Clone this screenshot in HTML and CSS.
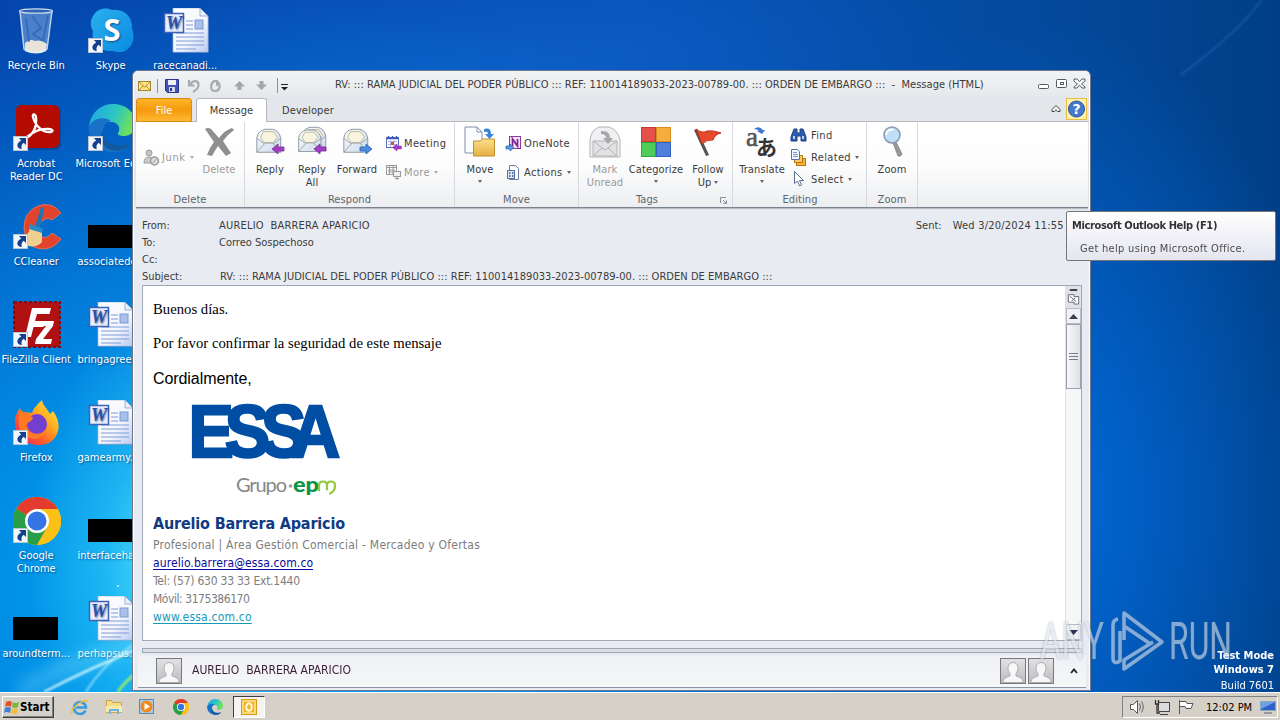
FILE: index.html
```html
<!DOCTYPE html>
<html lang="en">
<head>
<meta charset="utf-8">
<title>Desktop</title>
<link rel="stylesheet" href="styles.css">
</head>
<body>
<svg class="defs" width="0" height="0" aria-hidden="true">
  <defs>
    <linearGradient id="gPaper" x1="0" y1="0" x2="1" y2="1"><stop offset="0" stop-color="#fff"/><stop offset=".6" stop-color="#f3f6fd"/><stop offset="1" stop-color="#b9c8ee"/></linearGradient>
    <linearGradient id="gEnv" x1="0" y1="0" x2="1" y2="1"><stop offset="0" stop-color="#fdfdfd"/><stop offset="1" stop-color="#c9d9ea"/></linearGradient>
    <linearGradient id="gFolder" x1="0" y1="0" x2="0" y2="1"><stop offset="0" stop-color="#fbe08f"/><stop offset="1" stop-color="#e5b040"/></linearGradient>
    <linearGradient id="gPerson" x1="0" y1="0" x2="0" y2="1"><stop offset="0" stop-color="#e2e2e4"/><stop offset="1" stop-color="#bcbcc0"/></linearGradient>
    <linearGradient id="gSkype" x1="0" y1="0" x2="1" y2="1"><stop offset="0" stop-color="#2bb0ee"/><stop offset="1" stop-color="#0a8be0"/></linearGradient>
    <linearGradient id="gEdge1" x1="0" y1="0" x2="1" y2=".3"><stop offset="0" stop-color="#1fa4e8"/><stop offset=".6" stop-color="#2cc7c0"/><stop offset="1" stop-color="#6fe05a"/></linearGradient>
    <linearGradient id="gFox" x1="1" y1="0" x2="0" y2="1"><stop offset="0" stop-color="#fff04a"/><stop offset=".35" stop-color="#ffb021"/><stop offset=".65" stop-color="#ff5a2a"/><stop offset="1" stop-color="#e3187c"/></linearGradient>
    <symbol id="shortcut" viewBox="0 0 15 15"><rect x=".5" y=".5" width="14" height="14" fill="#f2f5fa" stroke="#b9c4d4"/><path d="M6 2h7v7l-2.300-2.200C8.500 8.600 8 10.300 8.800 13 3.500 12.500 2.500 7.500 8.200 4.400z" fill="#12408c"/></symbol>
    <symbol id="word" viewBox="0 0 48 48">
      <path d="M12 1h27l10 9v35H12z" fill="#5d7fc6" opacity=".5"/>
      <path d="M12 0h27l8 8v36H12z" fill="url(#gPaper)" stroke="#a8b8de" stroke-width=".7"/>
      <path d="M39 0v8h8z" fill="#e9effc" stroke="#8294bd" stroke-width=".7"/>
      <path d="M25 13h7M25 17h7M25 21h7M15 25h28M15 29h28M15 33h28M15 37h28M15 41h20" stroke="#7f9bd8" stroke-width="1"/>
      <rect x="34" y="12" width="8" height="9" fill="#a9c0ec" stroke="#7d99d2"/>
      <rect x="3.500" y="5.500" width="19" height="19" fill="#e8effc" stroke="#3f62b4" stroke-width="1.500"/>
      <text x="13" y="21" class="glyph-w" text-anchor="middle" fill="#2a4fa8">W</text>
    </symbol>
    <symbol id="chrome" viewBox="0 0 48 48">
      <circle cx="24" cy="24" r="24" fill="#fbc116"/>
      <path d="M24 24L3.200 12A24 24 0 0 1 44.800 12z" fill="#e33b2e"/>
      <path d="M3.200 12A24 24 0 0 0 24 48L34.400 30 24 24z" fill="#2a9d47"/>
      <path d="M24 12h20.800A24 24 0 0 1 24 48l10.400-18z" fill="#fbc116"/>
      <circle cx="24" cy="24" r="12" fill="#fff"/><circle cx="24" cy="24" r="9.500" fill="#3474e4"/>
    </symbol>
    <symbol id="edge" viewBox="0 0 48 48">
      <path d="M1 22C3 8 13 0 25 0c14 0 23 10 23 20 0 8-6 12-12 12-4 0-7-1-6-3 3-4 1-11-7-11C13 17 4 20 1 30z" fill="url(#gEdge1)"/>
      <path d="M1 22c4-8 16-10 22-5-6 1-9 7-8 13 1 8 8 14 16 14 6 0 11-3 12-4C36 50 20 51 9 42 2 36 0 29 1 22z" fill="#1a72c8"/>
      <path d="M15 28c1 12 13 17 28 11-5 9-20 11-28 2-4-5-3-10 0-13z" fill="#125aa0"/>
    </symbol>
    <symbol id="envelope" viewBox="0 0 32 32">
      <path d="M3 13Q4 5 12 3.500h8Q27 5 28.500 13v15H3z" fill="url(#gEnv)" stroke="#8b949d"/>
      <path d="M7 12l3-6h11l4 6-5 6h-9z" fill="#f8f4e0" stroke="#b9b28f" stroke-width=".9"/>
      <path d="M3 28l9-10h8l8.500 10M3 13l8 6M28.500 13l-8 6" fill="none" stroke="#8f9aa5" stroke-width=".9"/>
    </symbol>
    <symbol id="arrowL" viewBox="0 0 14 12"><path d="M1 6l6-5v3h6v4H7v3z" fill="#a33ec4" stroke="#7d2a9b" stroke-width=".8"/></symbol>
    <symbol id="person" viewBox="0 0 26 26">
      <rect x=".5" y=".5" width="25" height="25" fill="url(#gPerson)" stroke="#77797d"/>
      <path d="M3 24.500c0-4.500 3-5 7-6.500v-2.500c-3-3-3-11 3-11s6 8 3 11V18c4 1.500 7 2 7 6.500z" fill="#f7f7f8" stroke="#a0a0a4" stroke-width=".8"/>
    </symbol>
  </defs>
</svg>

<div class="desktop">
  <svg class="rays" width="1280" height="692" viewBox="0 0 1280 692">
    <defs><filter id="soft"><feGaussianBlur stdDeviation="1.300"/></filter><filter id="soft2"><feGaussianBlur stdDeviation="8"/></filter></defs>
    <path d="M20 692Q80 655 140 645" fill="none" stroke="#8feaff" stroke-width="14" opacity=".35" filter="url(#soft2)"/>
    <g filter="url(#soft)" fill="none">
      <path d="M44 692Q90 668 140 648" stroke="#d9faff" stroke-width="2.500" opacity=".85"/>
      <path d="M86 692Q104 662 138 642" stroke="#c0f4ff" stroke-width="2" opacity=".7"/>
      <path d="M118 692Q124 682 140 670" stroke="#a8f060" stroke-width="2.500"/>
      <path d="M1180 75Q1230 40 1262 0" stroke="#4f90d8" stroke-width="2" opacity=".3"/>
    </g>
    <circle cx="118" cy="586" r="1" fill="#b8f4ff"/>
  </svg>

  <div class="icons">
    <div class="icon"><svg viewBox="0 0 48 48"><path d="M8 3l4 38q12 6 23 0l5-38z" fill="#6f9fda" opacity=".65"/><path d="M8 3l4 38q12 6 23 0l5-38" fill="none" stroke="#b9d2ee" stroke-width="1.500"/><path d="M13 35q5-5 10-2 6-2 12 3l-1 6q-10 5-21 0z" fill="#e9e4d8"/><path d="M14 10l3 24M20 8l9 12-8 6 9 6M36 7l-5 26" stroke="#2f62b4" stroke-width="2" fill="none" opacity=".7"/><ellipse cx="24" cy="3" rx="16.500" ry="2.200" fill="#2f62b4" stroke="#cfdcee" stroke-width="1.300"/><path d="M13 42q11 5 21 0" fill="none" stroke="#e4ebf4" stroke-width="2"/></svg><span>Recycle Bin</span></div>
    <div class="icon"><svg viewBox="0 0 48 48"><rect x="4" y="0" width="45" height="44" rx="6" fill="#0b2e66" opacity=".4"/><rect x="4" y="-1" width="43" height="43" rx="5" fill="#b30b00"/><path d="M12 33c10-4 13-12 12-22-1-4-4-3-3 0 2 8 9 16 18 15 3-1 1-3-2-3-8-1-16 3-22 8-3 2-5 4-3 2z" fill="none" stroke="#fff" stroke-width="2.300"/><use href="#shortcut" x="1" y="30" width="15" height="15"/></svg><span>Acrobat<br>Reader DC</span></div>
    <div class="icon"><svg viewBox="0 0 48 48"><path d="M49 9Q40-3 26 2 12 8 12 24q1 20 18 21 12 0 19-10l-9-6q-6 7-12 3-6-6 1-14 6-6 11-2z" fill="#e2432c" stroke="#f27a52" stroke-width=".8"/><path d="M29 3l3 1-4 21-5-2z" fill="#1d76b8"/><path d="M18 22l12 4 0 12q-6 7-17 3l-5-5q9-3 10-14z" fill="#f1cf90"/><path d="M18 20l13 5-1 4-13-4z" fill="#2c8cc8"/><use href="#shortcut" x="1" y="30" width="15" height="15"/></svg><span>CCleaner</span></div>
    <div class="icon"><svg viewBox="0 0 48 48"><rect x="2" y="0" width="46" height="45" fill="#b01214"/><rect x="2" y="0" width="46" height="45" fill="none" stroke="#7f0b14" stroke-width="2" stroke-dasharray="3 2"/><path d="M13 35l7-29h19l-1.500 6H25l-2 7h10l-1.500 6H21.500l-2.500 10z" fill="#fff"/><path d="M27 19h15l-1 5-10 13h9l-1 5H23l1-5 10-13h-8z" fill="#fff"/><use href="#shortcut" x="1" y="30" width="15" height="15"/></svg><span>FileZilla Client</span></div>
    <div class="icon"><svg viewBox="0 0 48 48"><path d="M3 24C2 17 6 11 8 8c1 3 3 4 5 4l7 1c2-6 7-10 10-13 1 6 5 8 8 14l3-3c6 8 7 17 4 23-4 9-12 11-19 11C13 45 4 36 3 24z" fill="url(#gFox)"/><circle cx="25" cy="24" r="10" fill="#7140d0"/><path d="M8 12c4 4 10 2 13 6-1 4-7 4-7 8 2 8 12 10 19 6-3 7-13 9-20 4-6-4-8-14-5-24z" fill="#ff7a25"/><use href="#shortcut" x="1" y="30" width="15" height="15"/></svg><span>Firefox</span></div>
    <div class="icon"><svg viewBox="0 0 48 48"><use href="#chrome" x="1" y="-1" width="48" height="48"/><use href="#shortcut" x="1" y="30" width="15" height="15"/></svg><span>Google<br>Chrome</span></div>
    <div class="icon"><svg viewBox="0 0 48 48"><rect x="1" y="21" width="45" height="23" fill="#000"/></svg><span>aroundterm...</span></div>

    <div class="icon"><svg viewBox="0 0 48 48"><path d="M6 8C10 0 20-1 25 2 37 0 46 9 45 21c4 10 0 18-7 22-5 2-10 1-12 0C13 44 4 36 6 23 3 18 3 13 6 8z" fill="url(#gSkype)"/><text x="25" y="33" text-anchor="middle" class="glyph-s" fill="#fff">S</text><use href="#shortcut" x="1" y="30" width="15" height="15"/></svg><span>Skype</span></div>
    <div class="icon"><svg viewBox="0 0 48 48"><use href="#edge" x="1" y="-2" width="48" height="48"/><use href="#shortcut" x="1" y="30" width="15" height="15"/></svg><span class="clip edge">Microsoft Edge</span></div>
    <div class="icon"><svg viewBox="0 0 48 48"><rect x="1" y="21" width="45" height="23" fill="#000"/></svg><span class="clip">associatede...</span></div>
    <div class="icon"><svg viewBox="0 0 48 48"><use href="#word" x="-1" width="48" height="48"/></svg><span class="clip">bringagree...</span></div>
    <div class="icon"><svg viewBox="0 0 48 48"><use href="#word" x="-1" width="48" height="48"/></svg><span class="clip">gamearmy.rtf</span></div>
    <div class="icon"><svg viewBox="0 0 48 48"><rect x="1" y="21" width="45" height="23" fill="#000"/></svg><span class="clip">interfaceha...</span></div>
    <div class="icon"><svg viewBox="0 0 48 48"><use href="#word" x="-1" width="48" height="48"/></svg><span class="clip">perhapsus.rtf</span></div>

    <div class="icon"><svg viewBox="0 0 48 48"><use href="#word" width="48" height="48"/></svg><span>racecanadi...</span></div>
  </div>

  <div class="build"><b>Test Mode</b><b>Windows 7</b><span>Build 7601</span></div>

  <main class="window">
    <header class="titlebar">
      <svg class="qat" width="160" height="26" viewBox="0 0 160 26">
        <rect x="3.500" y="9.500" width="12" height="9" fill="#ffe58a" stroke="#a8862c"/><path d="M4 10l5.500 5 5.500-5M4 18l4-4M15 18l-4-4" fill="none" stroke="#b08a2a"/>
        <path d="M22.500 7v14" stroke="#8a9098"/>
        <path d="M30.500 7.500h13v13h-11l-2-2z" fill="#4252b4" stroke="#2b3588"/><rect x="33" y="8" width="8" height="5" fill="#eaf0fb"/><rect x="34" y="15" width="6" height="5" fill="#d0d8ea"/><rect x="35" y="16" width="2" height="3" fill="#2b3588"/>
        <path d="M54 8v5.500h5.500M55 13c2-5 8-5 8.500-1s-2 6-5.500 8" fill="none" stroke="#a9acb2" stroke-width="2.200"/>
        <path d="M79 9c-4 3-4 10 1 10s6-6 3-9M78 9h4v5" fill="none" stroke="#a9acb2" stroke-width="2.200"/>
        <path d="M99 14.500l5.500-5.500 5.500 5.500h-3.500v3.500h-4v-3.500zM121 12.500l5.500 5.500 5.500-5.500h-3.500V9h-4v3.500z" fill="#a3a6ab"/>
        <path d="M142.500 6v15" stroke="#8a9098"/><path d="M146 12.500h7" stroke="#222" stroke-width="1.200"/><path d="M146 15h7l-3.500 3.500z" fill="#222"/>
      </svg>
      <h1>RV: ::: RAMA JUDICIAL DEL PODER PÚBLICO ::: REF: 110014189033-2023-00789-00. ::: ORDEN DE EMBARGO ::: &nbsp;-&nbsp; Message (HTML)</h1>
      <svg class="winctl" width="50" height="14" viewBox="0 0 50 14"><g fill="#fff" stroke="#555a62"><rect x=".5" y="6.500" width="10" height="4" rx="1"/><rect x="18.500" y="1.500" width="10" height="8" rx="1"/><rect x="22.500" y="4.500" width="3" height="2"/></g><path d="M36 1h3l2.500 2.800L44 1h3v2l-3.500 3L47 9v1h-3l-2.500-2.800L39 10h-3v-1l3.500-3L36 3z" fill="#fff" stroke="#555a62"/></svg>
    </header>
    <nav class="tabs">
      <span class="tab file">File</span><span class="tab active">Message</span><span class="tab dev">Developer</span>
      <svg class="help" width="36" height="22" viewBox="0 0 36 22"><path d="M2 13.500V11.500l4-4 4 4v2H7.500L6 11.800 4.500 13.500z" fill="#fff" stroke="#444"/><rect x="16.500" y=".5" width="20" height="21" fill="#fdf0b0" stroke="#e8c040"/><circle cx="26.500" cy="11" r="8" fill="#4478c8" stroke="#2a55a4"/><text x="26.500" y="16" text-anchor="middle" class="glyph-q" fill="#fff">?</text></svg>
    </nav>

    <section class="ribbon">
      <div class="group g-delete">
        <div class="tools">
          <div class="col junk"><span class="small off"><svg viewBox="0 0 17 17"><circle cx="6" cy="4" r="3" fill="#c4c4c4" stroke="#9a9a9a"/><path d="M1 14q0-6 5-6t5 6z" fill="#ccc" stroke="#9a9a9a"/><circle cx="11.500" cy="12" r="4" fill="#ddd" stroke="#9a9a9a" stroke-width="1.500"/><path d="M9 14.500l5-5" stroke="#9a9a9a"/></svg>Junk<i></i></span></div>
          <div class="big off w40"><svg viewBox="0 0 32 32"><path d="M2 3q3-2 6 0l8 9q6-8 13-10l2 2q-6 4-11 11l8 12-5 3-8-10q-4 6-6 10l-5-1q2-7 7-13z" fill="#8f8f8f"/></svg>Delete</div>
        </div>
        <div class="gname">Delete</div>
      </div>
      <div class="group g-respond">
        <div class="tools">
          <div class="big w42"><svg viewBox="0 0 32 32"><use href="#envelope" width="30" height="30"/><use href="#arrowL" x="17" y="17" width="14" height="12"/></svg>Reply</div>
          <div class="big w42"><svg viewBox="0 0 32 32"><use href="#envelope" x="3" y="-2" width="30" height="30"/><use href="#envelope" width="28" height="30"/><use href="#arrowL" x="17" y="17" width="14" height="12"/></svg>Reply<br>All</div>
          <div class="big w48"><svg viewBox="0 0 32 32"><use href="#envelope" width="30" height="30"/><path d="M31 23l-6-5v3h-6v4h6v3z" fill="#4a8be0" stroke="#2b62b4" stroke-width=".8"/></svg>Forward</div>
          <div class="col two"><span class="small"><svg viewBox="0 0 17 17"><rect x="1.500" y="2.500" width="12" height="10" fill="#fff" stroke="#5a6fbe"/><path d="M1.500 3.500h12M3.500 1v3M7.500 1v3M11.500 1v3" stroke="#3f58b4" stroke-width="1.500"/><path d="M3 6.500h9M3 9.500h9M5.500 5v7M9 5v7" stroke="#9aabdd" stroke-width=".8"/><rect x="6" y="7" width="3" height="3" fill="#e05040"/><use href="#arrowL" x="7" y="8" width="10" height="9"/></svg>Meeting</span><span class="small off"><svg viewBox="0 0 17 17"><rect x="1.500" y="1.500" width="10" height="9" fill="#fff" stroke="#999"/><path d="M1.500 3.500h10M3 6h7M3 8h7M4.500 2v8M8 2v8" stroke="#999"/><rect x="8.500" y="7.500" width="7" height="5" fill="#eee" stroke="#999"/><path d="M12 12v4M10 14.500h4" stroke="#999"/></svg>More<i></i></span></div>
        </div>
        <div class="gname">Respond</div>
      </div>
      <div class="group g-move">
        <div class="tools">
          <div class="big w42"><svg viewBox="0 0 32 32"><path d="M1 1h12l5 5v21H1z" fill="#fcfdff" stroke="#8090a8"/><path d="M13 1v5h5" fill="none" stroke="#8090a8"/><path d="M9.500 15h7l2-2h12v17h-21z" fill="url(#gFolder)" stroke="#c18e2c"/><path d="M20 3q7-2 7 5h3l-4.500 5L21 8h3q0-3-4-2z" fill="#3c82d8"/></svg>Move<i></i></div>
          <div class="col two"><span class="small"><svg viewBox="0 0 17 17"><rect x="4.500" y="1.500" width="11" height="12" fill="#f3e3f8" stroke="#8c3aa0"/><path d="M7.500 11V4l5 7V4" fill="none" stroke="#7c2490" stroke-width="1.700"/><path d="M1 11h4V9l4 3.500L5 16v-2H1z" fill="#5b9ae6" stroke="#2f62b0" stroke-width=".7"/></svg>OneNote</span><span class="small"><svg viewBox="0 0 17 17"><path d="M4.500 1.500h6l3 3v11h-9z" fill="#fff" stroke="#6d7f9e"/><rect x="2.500" y="6.500" width="7" height="8" fill="#e0e8f6" stroke="#5c719a"/><path d="M4 9h1.500M7 9h1.500M4 12h1.500M7 12h1.500" stroke="#33508c" stroke-width="1.300"/></svg>Actions<i></i></span></div>
        </div>
        <div class="gname">Move</div>
      </div>
      <div class="group g-tags">
        <div class="tools">
          <div class="big off w44"><svg viewBox="0 0 32 32"><path d="M1 14Q2 4 10 1h10q9 3 11 13v17H1z" fill="#f0f0f2" stroke="#b4b4b6"/><path d="M4 15h24v15H4z" fill="#e2e2e4" stroke="#b4b4b6"/><path d="M4 15l12 9 12-9M4 30l9-8M28 30l-9-8" fill="none" stroke="#b4b4b6"/><path d="M12 5q9-1 9 7h3l-5 6-5-6h3q0-4-5-4z" fill="#a8a8ab"/></svg>Mark<br>Unread</div>
          <div class="big w58"><svg viewBox="0 0 32 32"><rect x="1.500" y="1.500" width="14" height="14" fill="#e4504a" stroke="#c83834"/><rect x="16.500" y="1.500" width="14" height="14" fill="#f5ad3e" stroke="#d98c22"/><rect x="1.500" y="16.500" width="14" height="14" fill="#4fcb58" stroke="#2fa83c"/><rect x="16.500" y="16.500" width="14" height="14" fill="#4f7fdc" stroke="#3462c0"/></svg>Categorize<i></i></div>
          <div class="big w46"><svg viewBox="0 0 32 32"><path d="M2 4l3-1 12 26-3 1z" fill="#555"/><path d="M4 3q6 5 11 2 6-1 14 2-6 1-8 7-6-1-11 4z" fill="#e8482c" stroke="#b8301c"/></svg>Follow<br><span>Up<i class="in"></i></span></div>
        </div>
        <div class="gname">Tags<svg class="launch" viewBox="0 0 9 9"><path d="M1.500 7V1.500H7M4 4l3 3M7.500 4.500v3h-3" fill="none" stroke="#8a9098"/></svg></div>
      </div>
      <div class="group g-edit">
        <div class="tools">
          <div class="big w48"><svg viewBox="0 0 32 32"><text x="0" y="20" class="glyph-a" fill="#555">a</text><text x="10" y="29" class="glyph-jp" fill="#333">あ</text><path d="M8 3q5-4 9 1h2l-3 4-5-3h2q-2-2-5-2z" fill="#3c78d0"/></svg>Translate<i></i></div>
          <div class="col three"><span class="small"><svg viewBox="0 0 17 17"><path d="M4 2h3v4h3V2h3l3 8v4h-5v-5H7v5H1v-4z" fill="#2c5cb0" stroke="#1d3f84"/><rect x="3" y="9" width="2" height="3" fill="#bcd2f2"/><rect x="12" y="9" width="2" height="3" fill="#bcd2f2"/></svg>Find</span><span class="small"><svg viewBox="0 0 17 17"><rect x="6.500" y="9.500" width="9" height="7" fill="#f4b234" stroke="#b87a14"/><rect x="4.500" y="6.500" width="8" height="7" fill="#f9ca5c" stroke="#b87a14"/><path d="M1.500 .5h6l2 2v8h-8z" fill="#f4f7fd" stroke="#5471ac"/><path d="M3 3.500h4M3 5.500h5M3 7.500h5" stroke="#7d96c8"/></svg>Related<i></i></span><span class="small"><svg viewBox="0 0 17 17"><path d="M4.500 .5v12l3-2.500 2 5 2-1-2-4.500h4z" fill="#fff" stroke="#5d7090"/></svg>Select<i></i></span></div>
        </div>
        <div class="gname">Editing</div>
      </div>
      <div class="group g-zoom">
        <div class="tools"><div class="big w50"><svg viewBox="0 0 32 32"><path d="M17 17l3-1 6 12q-1 3-4 2z" fill="#999" stroke="#666" stroke-width=".6"/><circle cx="16" cy="9" r="8" fill="#bfe0f8" stroke="#8c9cae" stroke-width="1.600"/><path d="M10 9q1-6 7-5" fill="none" stroke="#fff" stroke-width="2"/></svg>Zoom</div></div>
        <div class="gname">Zoom</div>
      </div>
    </section>

    <section class="headers">
      <dl>
        <dt>From:</dt><dd class="from">AURELIO&nbsp; BARRERA APARICIO</dd>
        <dt>To:</dt><dd>Correo Sospechoso</dd>
        <dt>Cc:</dt><dd></dd>
        <dt>Subject:</dt><dd class="subj">RV: ::: RAMA JUDICIAL DEL PODER PÚBLICO ::: REF: 110014189033-2023-00789-00. ::: ORDEN DE EMBARGO :::</dd>
      </dl>
      <p class="sent"><span>Sent:</span><span class="date">Wed 3/20/2024 11:55 AM</span></p>
    </section>

    <section class="message">
      <article>
        <p class="serif">Buenos días.</p>
        <p class="serif">Por favor confirmar la seguridad de este mensaje</p>
        <p class="sans">Cordialmente,</p>
        <svg class="essa" width="200" height="108" viewBox="0 0 200 108">
          <g transform="scale(.92 1)" class="logo"><text x="38.500" y="69">E</text><text x="78" y="69">S</text><text x="117.500" y="69">S</text><text x="150" y="69">A</text></g>
          <text class="grupo" x="83" y="103.500" fill="#85878a" textLength="51">Grupo</text><circle cx="137.500" cy="98" r="1.800" fill="#9a9c9e"/>
          <text class="epm" x="140" y="103.500" fill="#0a9448" textLength="26" lengthAdjust="spacingAndGlyphs">ep</text>
          <path d="M166 102.500v-5q0-4 4-4t4 4v4M174 97.500q0-4 4-4t4 4q0 6-5 8" fill="none" stroke="#94c83d" stroke-width="2.200" stroke-linecap="round"/>
        </svg>
        <p class="name">Aurelio Barrera Aparicio</p>
        <p class="sig s1">Profesional | Área Gestión Comercial - Mercadeo y Ofertas</p>
        <p class="sig s2"><a class="mail">aurelio.barrera@essa.com.co</a></p>
        <p class="sig s3">Tel: (57) 630 33 33 Ext.1440</p>
        <p class="sig s4">Móvil: 3175386170</p>
        <p class="sig s5"><a class="web">www.essa.com.co</a></p>
      </article>
      <aside class="scroll">
        <svg class="ruler" viewBox="0 0 16 22"><path d="M4 3.500h8" stroke="#444" stroke-width="2"/><path d="M2.500 8.500h6v2h5v8h-5v-2h-6z" fill="#fff" stroke="#666a78"/><path d="M4 10l7 6M10 12l-4 3" stroke="#666a78"/></svg>
        <span class="btn"><svg viewBox="0 0 9 5"><path d="M0 5h9L4.500 0z" fill="#3a3f56"/></svg></span>
        <span class="thumb"></span>
        <span class="btn down"><svg viewBox="0 0 9 5"><path d="M0 0h9L4.500 5z" fill="#2a2f56"/></svg></span>
      </aside>
    </section>
    <div class="splitter"></div>
    <footer class="people">
      <svg class="av" viewBox="0 0 26 26"><use href="#person" width="26" height="26"/></svg>
      <span class="who">AURELIO&nbsp; BARRERA APARICIO</span>
      <svg class="av" viewBox="0 0 26 26"><use href="#person" width="26" height="26"/></svg>
      <svg class="av last" viewBox="0 0 26 26"><use href="#person" width="26" height="26"/></svg>
      <svg class="chev" viewBox="0 0 8 6"><path d="M1 5l3-3.500L7 5" fill="none" stroke="#222" stroke-width="1.800"/></svg>
    </footer>
  </main>

  <div class="tooltip"><b>Microsoft Outlook Help (F1)</b><span>Get help using Microsoft Office.</span></div>

  <svg class="mark" width="200" height="70" viewBox="0 0 200 70">
    <g fill="#dce4ee">
      <text class="wm" x="8" y="53" textLength="64" lengthAdjust="spacingAndGlyphs">ANY</text>
      <text class="wm" x="137" y="53" textLength="63" lengthAdjust="spacingAndGlyphs">RUN</text>
    </g>
    <path d="M86 13q-5 1-5 6v34q1 6 7 2V25M92 34V7l38 29-38 27v-9l29-18M92 20l25 17" fill="none" stroke="#dce4ee" stroke-width="3.500" stroke-linejoin="round"/>
  </svg>
</div>

<footer class="taskbar">
  <span class="start"><svg viewBox="0 0 16 16"><path d="M2 3q3-2 6 0L7 8q-3-2-6 0z" fill="#e8502c"/><path d="M9 3q3 2 6 0l-1 5q-3 2-6 0z" fill="#74b83c"/><path d="M1 9q3-2 6 0l-1 5q-3-2-6 0z" fill="#3f7fd8"/><path d="M8 9q3 2 6 0l-1 5q-3 2-6 0z" fill="#f4be34"/></svg>Start</span>
  <svg class="q" viewBox="0 0 18 18"><path d="M14.500 12.500A6 6 0 1 1 15 9.500H5" fill="none" stroke="#3a9be0" stroke-width="2.600"/><path d="M1 16Q-1 12 7 6q9-6 10-2" fill="none" stroke="#f0bd3a" stroke-width="1.500"/></svg>
  <svg class="q" viewBox="0 0 18 18"><path d="M1.500 2.500h5l1 2h9v10h-15z" fill="#f5dd8a" stroke="#c9a548"/><path d="M1 8h16v6H1z" fill="#fbe9a8"/><path d="M4 16v-5h10v5h-2v-3H6v3z" fill="#6fb4e8"/></svg>
  <svg class="q" viewBox="0 0 18 18"><rect x="1.500" y="1.500" width="14" height="14" fill="#a8cbe8" stroke="#5a88b0"/><circle cx="8.500" cy="8.500" r="6" fill="#f08a1c"/><path d="M6.500 5v7l5.500-3.500z" fill="#fff"/></svg>
  <svg class="q" viewBox="0 0 18 18"><use href="#chrome" x="1" y="1" width="16" height="16"/></svg>
  <svg class="q" viewBox="0 0 18 18"><use href="#edge" x="1" y="1" width="16" height="16"/></svg>
  <span class="running"><svg viewBox="0 0 18 18"><rect x="1.500" y="1.500" width="15" height="15" fill="#fbd874" stroke="#d99c18"/><rect x="4" y="4" width="10" height="10" fill="#f0b428"/><ellipse cx="9" cy="9" rx="2.800" ry="3.800" fill="none" stroke="#fff8dc" stroke-width="2"/></svg></span>
  <div class="tray">
    <svg class="t1" viewBox="0 0 68 18"><path d="M2.500 6.500h3l4-4v13l-4-4h-3z" fill="#fff" stroke="#555"/><path d="M11.500 5.500q2 3.500 0 7M13.500 3.500q3.500 5.500 0 11" fill="none" stroke="#666"/><path d="M30.500 4.500h11v9h-11zM32 16.500h8" fill="#dcdcdc" stroke="#444"/><path d="M27.500 2v4h3V2M29 6v9h3" fill="none" stroke="#333" stroke-width="1.300"/><path d="M51.500 2v14M52 3.500h6l1 2h6l-2 5h-5l-1-2h-5" fill="#fff" stroke="#555"/></svg>
    <time>12:02 PM</time>
    <svg class="t2" viewBox="0 0 16 14"><rect x=".5" y="1.500" width="15" height="9" fill="#2f62c8" stroke="#8ab"/><path d="M1 2h14L1 9z" fill="#6da0ea"/><path d="M4 13h8" stroke="#567"/></svg>
  </div>
</footer>
</body>
</html>
```
FILE: styles.css
```css
* { box-sizing: border-box; }
body { margin: 0; width: 1280px; height: 720px; overflow: hidden; display: flex; flex-direction: column; font: 11px/13px "DejaVu Sans Condensed", "DejaVu Sans", sans-serif; color: #3b3b3b; }
p, h1, dl, dd { margin: 0; }
svg { display: block; overflow: visible; }
.defs { position: absolute; }

.desktop {
  position: relative; height: 692px; overflow: hidden;
  background:
    radial-gradient(ellipse 150px 260px at 180px 560px, rgba(110,240,250,.85), rgba(70,215,250,.4) 50%, rgba(40,190,250,0) 100%),
    radial-gradient(ellipse 700px 600px at 250px 590px, rgba(0,190,255,.95), rgba(0,160,245,.7) 45%, rgba(0,110,220,0) 100%),
    radial-gradient(ellipse 300px 480px at 1040px 500px, rgba(0,110,225,.9), rgba(0,90,200,0) 100%),
    radial-gradient(ellipse 420px 120px at 560px 60px, rgba(16,100,205,.6), rgba(10,80,180,0) 100%),
    linear-gradient(90deg, #0446ae 0%, #0652b8 50%, #044a9e 80%, #003f86 100%);
}
.rays { position: absolute; left: 0; top: 0; }

.icons { display: grid; grid-template-rows: repeat(7, 98px); grid-auto-flow: column; grid-auto-columns: 74.500px; margin-left: -1px; width: max-content; }
.icon { display: flex; flex-direction: column; align-items: center; padding-top: 8px; color: #fff; text-align: center; text-shadow: 1px 1px 2px rgba(0,30,90,.6); }
.icon svg { width: 48px; height: 48px; flex: none; }
.icon span { margin-top: 3px; white-space: nowrap; }
.icon .clip { align-self: flex-start; padding-left: 4px; }
.icon .edge { padding-left: 2px; }
.glyph-w { font: italic bold 18px "Liberation Serif", serif; }
.glyph-s { font: bold 31px "Open Sans", sans-serif; }
.glyph-q { font: bold 14px "DejaVu Sans", sans-serif; }
.glyph-a { font: 27px "Liberation Serif", serif; stroke: #555; stroke-width: .6; }
.glyph-jp { font: bold 21px "Noto Sans CJK JP", sans-serif; }

.build { position: absolute; right: 6px; bottom: -3px; display: flex; flex-direction: column; align-items: flex-end; color: #fff; line-height: 14px; }
.build span { line-height: 18px; }

.window { position: absolute; left: 132px; top: 70px; width: 959px; height: 621px; padding: 0 3px 0 4px; display: flex; flex-direction: column; background: #e8ebf1; border: 1px solid #6c7889; border-radius: 6px 6px 0 0; box-shadow: inset 1px 1px 0 #fff, inset -1px 0 0 #fff; overflow: hidden; }
.titlebar { height: 27px; flex: none; display: flex; align-items: center; margin: 0 -2px; background: linear-gradient(#f2f3f5, #e5e8eb); }
.titlebar h1 { font-size: 11px; font-weight: normal; width: 650px; margin-left: 40px; letter-spacing: .02px; white-space: nowrap; }
.winctl { margin-left: 53px; }
.tabs { height: 24px; flex: none; display: flex; background: #e3e6ea; margin: 0 -2px; padding-left: 2px; border-bottom: 1px solid #b6babf; }
.tab { height: 24px; line-height: 25px; text-align: center; }
.tab.file { width: 56px; margin-left: -1px; color: #fff; background: linear-gradient(#ffb529, #f59a0c 50%, #ffb734); border: 1px solid #d98c13; border-radius: 3px 3px 0 0; line-height: 23px; }
.tab.active { width: 71px; margin-left: 4px; background: #fff; border: 1px solid #b6babf; border-bottom: 0; border-radius: 3px 3px 0 0; line-height: 24px; }
.tab.dev { margin-left: 15px; letter-spacing: .1px; }
.help { margin-left: auto; margin-right: 3px; }

.ribbon { height: 86px; flex: none; display: flex; background: linear-gradient(#fff, #fdfdfd 50%, #eceef1); border-bottom: 1px solid #7c838d; box-shadow: 0 1px 1px #b8bcc4; margin: 0 -1px; }
.group { display: flex; flex-direction: column; border-right: 1px solid #d6d9de; }
.tools { display: flex; height: 71px; }
.gname { text-align: center; color: #5e646c; position: relative; line-height: 13px; letter-spacing: .1px; }
.launch { position: absolute; right: 4px; top: 3px; width: 9px; height: 9px; }
.g-delete { width: 109px; }
.g-respond { width: 210px; padding-left: 4px; }
.g-respond .gname, .g-move .gname, .g-edit .gname { margin-left: -4px; }
.g-move { width: 124px; padding-left: 4px; }
.g-tags { width: 154px; padding-left: 4px; }
.g-tags .gname { padding-right: 21px; }
.g-edit { width: 134px; padding-left: 5px; }
.g-zoom { width: 51px; }
.big { display: flex; flex-direction: column; align-items: center; padding-top: 4px; text-align: center; white-space: nowrap; letter-spacing: .1px; }
.big > svg { width: 32px; height: 32px; margin-bottom: 5px; flex: none; }
.big.off, .small.off { color: #9a9a9a; }
.w40 { width: 40px; } .w42 { width: 42px; } .w44 { width: 44px; } .w46 { width: 46px; } .w48 { width: 48px; } .w50 { width: 50px; } .w58 { width: 58px; }
i { display: inline-block; border: 2.500px solid transparent; border-top: 3px solid #666; border-bottom: 0; }
.off i { border-top-color: #aaa; }
.big > i { margin-top: 4px; }
i.in { margin-left: 3px; vertical-align: 2px; }
.small i { margin-left: 4px; }
.col { display: flex; flex-direction: column; padding-left: 4px; }
.small { display: flex; align-items: center; height: 17px; white-space: nowrap; letter-spacing: .35px; }
.small svg { width: 17px; height: 17px; margin-right: 2px; flex: none; }
.two { padding-top: 13px; gap: 12px; }
.three { padding-top: 5px; gap: 5px; }
.three .small svg { margin-right: 4px; }
.junk { width: 63px; padding: 27px 0 0 7px; }
.junk .small { letter-spacing: .6px; }

.headers { height: 77px; flex: none; display: flex; justify-content: space-between; padding: 10px 0 0 5px; }
dl { display: grid; grid-template-columns: 77px auto; grid-auto-rows: 17px; white-space: nowrap; line-height: 15px; }
.from { letter-spacing: .2px; }
.subj { letter-spacing: .04px; padding-left: 1px; }
.sent { display: flex; gap: 11px; white-space: nowrap; line-height: 15px; margin-right: 4px; }
.date { letter-spacing: .22px; }

.message { height: 356px; flex: none; margin: 0 5px; border: 1px solid #a0a8b8; background: #fff; display: flex; justify-content: space-between; }
article { padding: 14px 0 0 10px; color: #000; white-space: nowrap; }
.serif { font: 14.700px/18px "Liberation Serif", serif; letter-spacing: .02px; margin-bottom: 16px; }
.sans { font: 16px/18px "Liberation Sans", sans-serif; margin-top: 18px; letter-spacing: -.08px; }
.logo { font: bold 74px "Liberation Sans", sans-serif; fill: #004ea3; stroke: #004ea3; stroke-width: 2.500px; }
.grupo { font: 20px Lato, sans-serif; }
.epm { font: 900 20px Lato, sans-serif; }
.name { font: bold 16px/20px "DejaVu Sans Condensed", sans-serif; letter-spacing: -.17px; color: #103a82; margin: 18px 0 2px; }
.sig { font-size: 12px; line-height: 18px; color: #7d7d7d; }
.s1 { letter-spacing: .24px; }
.s2 { letter-spacing: .1px; }
.s3 { letter-spacing: -.24px; }
.s4 { letter-spacing: -.45px; }
.s5 { letter-spacing: .2px; }
.sig a { text-decoration: underline; text-underline-offset: 2px; }
.mail { color: #0a0a9c; } .web { color: #1799b8; }
.scroll { width: 16px; display: flex; flex-direction: column; background: #f6f7f9; border-left: 1px solid #dde0e6; }
.ruler { height: 22px; background: #dfe2ea; flex: none; }
.btn { height: 16px; display: flex; align-items: center; justify-content: center; background: #f1f2f5; border: 1px solid #b6bbc6; }
.btn svg { width: 9px; height: 5px; }
.thumb { height: 65px; background: repeating-linear-gradient(#777c88 0 1px, transparent 1px 3px) center / 9px 7px no-repeat, linear-gradient(90deg, #f8f8fa, #dfe1e6); border: 1px solid #9aa1ad; }
.down { margin-top: auto; }
.splitter { height: 5px; flex: none; margin: 7px 5px 0; border: 1px solid #a0a6b2; background: #d9dde4; }
.people { flex: 1; margin: 2px 1px 2px; display: flex; align-items: center; padding: 0 8px 0 18px; background: linear-gradient(#eef0f4, #f6f7f9); border-bottom: 1px solid #8b95a4; color: #3a1f33; }
.av { width: 26px; height: 26px; }
.who { margin: 0 auto 0 10px; font-size: 12px; line-height: 16px; padding-bottom: 2px; }
.av.last { margin-left: 2px; }
.chev { width: 8px; height: 6px; margin-left: 16px; }

.tooltip { position: absolute; left: 1066px; top: 211px; width: 210px; height: 50px; padding: 7px 5px; display: flex; flex-direction: column; gap: 10px; background: linear-gradient(#fff, #e4e5f0); border: 1px solid #767676; border-radius: 2px; white-space: nowrap; color: #4c4c4c; }
.tooltip b { color: #333; letter-spacing: -.36px; }
.tooltip span { padding-left: 8px; letter-spacing: .31px; }
.mark { position: absolute; left: 1032px; top: 606px; opacity: .6; filter: drop-shadow(0 0 1px rgba(90,100,120,.7)); }
.wm { font: 400 52px Roboto, sans-serif; }

.taskbar { height: 28px; background: #d5d0c8; border-top: 1px solid #fff; display: flex; align-items: center; padding: 1px 2px 0 2px; color: #000; }
.start { width: 52px; height: 22px; display: flex; align-items: center; padding-left: 1px; font-weight: bold; font-size: 11.500px; background: #d5d0c8; border: 1px solid #fff; border-right-color: #404040; border-bottom-color: #404040; box-shadow: inset -1px -1px 0 #808080; }
.start svg { width: 16px; height: 16px; }
.q { width: 18px; height: 18px; margin-right: 15.700px; }
.start + .q { margin-left: 17px; }
.running { width: 32px; height: 22px; margin-left: -6px; display: flex; align-items: center; justify-content: center; background: #f6f4f0; border: 1px solid #404040; border-right-color: #fff; border-bottom-color: #fff; }
.running svg { width: 18px; height: 18px; }
.tray { margin-left: auto; width: 156px; height: 22px; display: flex; align-items: center; padding-left: 5px; border: 1px solid #808080; border-right-color: #fff; border-bottom-color: #fff; }
.t1 { width: 68px; height: 18px; }
.t2 { width: 16px; height: 14px; margin-left: 8px; }
time { margin-left: 10px; white-space: nowrap; }
```
